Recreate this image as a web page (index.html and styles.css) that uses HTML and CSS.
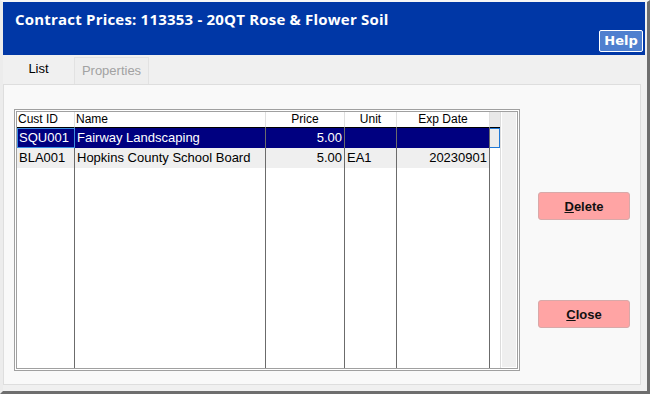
FILE: index.html
```html
<!doctype html>
<html lang="en">
  <head>
    <meta charset="UTF-8">
    <meta name="viewport" content="width=device-width, initial-scale=1.0">
    <title>Contract Prices</title>
    <link rel="stylesheet" href="styles.css">
  </head>
  <body>
    <div class="window">

      <header class="titlebar">
        <h1 class="title">Contract Prices: 113353 - 20QT Rose &amp; Flower Soil</h1>
        <div class="help-row">
          <button class="help-btn">Help</button>
        </div>
      </header>

      <nav class="tabs">
        <span class="tab tab-active">List</span>
        <span class="tab tab-disabled">Properties</span>
      </nav>

      <section class="panel">
        <div class="grid">
          <!-- header -->
          <div class="cell head">Cust ID</div>
          <div class="cell head">Name</div>
          <div class="cell head center">Price</div>
          <div class="cell head center">Unit</div>
          <div class="cell head center">Exp Date</div>
          <div class="cell head extra"></div>
          <div class="scrollbar"></div>

          <!-- row 1 (selected) -->
          <div class="cell row selected focus">SQU001</div>
          <div class="cell row selected">Fairway Landscaping</div>
          <div class="cell row selected right">5.00</div>
          <div class="cell row selected"></div>
          <div class="cell row selected right"></div>
          <div class="cell extra focus-extra"></div>

          <!-- row 2 -->
          <div class="cell row alt">BLA001</div>
          <div class="cell row alt">Hopkins County School Board</div>
          <div class="cell row alt right">5.00</div>
          <div class="cell row alt">EA1</div>
          <div class="cell row alt right">20230901</div>
          <div class="cell extra"></div>

          <!-- empty space -->
          <div class="cell"></div>
          <div class="cell"></div>
          <div class="cell"></div>
          <div class="cell"></div>
          <div class="cell"></div>
          <div class="cell extra"></div>
        </div>

        <div class="actions">
          <button class="btn"><u>D</u>elete</button>
          <button class="btn"><u>C</u>lose</button>
        </div>
      </section>

    </div>
  </body>
</html>
```

FILE: styles.css
```css
* {
  box-sizing: border-box;
}

body {
  margin: 0;
  background: #f0f0f0;
  font-family: "Liberation Sans", Arial, sans-serif;
  font-size: 13px;
  color: #000;
}

.window {
  width: 650px;
  height: 394px;
  display: flex;
  flex-direction: column;
  background: #f0f0f0;
  border-top: 2px solid #f6f6f6;
  border-left: 3px solid #ececec;
  border-right: 3px solid #6e6e6e;
  border-bottom: 3px solid #6e6e6e;
}

/* title bar */
.titlebar {
  height: 53px;
  flex: none;
  margin-right: 2px;
  padding: 7px 2px 0 12px;
  background: #0037a6;
  display: flex;
  flex-direction: column;
}

.title {
  margin: 0;
  font-family: "Open Sans", sans-serif;
  font-weight: 700;
  font-size: 15px;
  line-height: 20px;
  letter-spacing: 0.2px;
  color: #fff;
}

.help-row {
  display: flex;
  justify-content: flex-end;
  margin-top: 1px;
}

.help-btn {
  width: 44px;
  height: 22px;
  padding: 0;
  border: 1px solid #fff;
  border-radius: 2px;
  background: #4f7fcf;
  color: #fff;
  font-family: "DejaVu Sans", sans-serif;
  font-weight: 700;
  font-size: 13px;
  line-height: 18px;
}

/* tabs */
.tabs {
  height: 29px;
  flex: none;
  display: flex;
  align-items: flex-end;
}

.tab {
  text-align: center;
  line-height: 15px;
}

.tab-active {
  width: 71px;
  height: 29px;
  padding-top: 6px;
}

.tab-disabled {
  width: 75px;
  height: 27px;
  padding-top: 5px;
  border: 1px solid #e2e2e2;
  border-bottom: 0;
  background: #eeeeee;
  color: #a2a2a2;
}

/* main panel */
.panel {
  flex: 1;
  margin: 0 6px 6px 0;
  padding: 24px 10px 0 10px;
  background: #f9f9f9;
  border: 1px solid #dedede;
  display: flex;
  align-items: flex-start;
}

.grid {
  flex: none;
  width: 506px;
  height: 262px;
  border: 3px double #a0a0a0;
  background: #fff;
  display: grid;
  grid-template-columns: 58px 191px 79px 52px 93px 10px 17px;
  grid-template-rows: 16px 20px 20px 1fr;
}

.cell {
  border-right: 1px solid #6b6b6b;
  white-space: nowrap;
  overflow: hidden;
  background: #fff;
}

.head {
  font-size: 12px;
  line-height: 15px;
  padding-left: 1px;
  border-right-color: #e0e0e0;
  border-bottom: 1px solid #000;
}

.head.extra {
  background: #e8e8e8;
  border-right: 0;
}

.center {
  text-align: center;
  padding-left: 0;
}

.row {
  line-height: 20px;
  padding: 0 2px;
}

.right {
  text-align: right;
}

.selected {
  background: #000080;
  color: #fff;
}

.focus {
  padding-left: 1px;
  line-height: 18px;
  border: 1px solid #3d8ee0;
  border-right-color: #3d8ee0;
}

.alt {
  background: #efefef;
}

.extra {
  border-right: 0;
}

.focus-extra {
  background: #ececec;
  border: 1px solid #1f78d6;
  border-left: 0;
}

.scrollbar {
  grid-column: 7;
  grid-row: 1 / -1;
  background: #efefef;
  border-left: 1px solid #dcdcdc;
  box-shadow: inset 1px 0 #fff, inset -1px -1px #fff;
}

/* buttons */
.actions {
  margin-left: auto;
  padding-top: 83px;
  display: flex;
  flex-direction: column;
  gap: 80px;
}

.btn {
  width: 92px;
  height: 28px;
  padding: 0;
  border: 1px solid #d8a9a9;
  border-radius: 3px;
  background: #ffa4a4;
  color: #111;
  font-family: "Liberation Sans", Arial, sans-serif;
  font-weight: 700;
  font-size: 13px;
}
```
